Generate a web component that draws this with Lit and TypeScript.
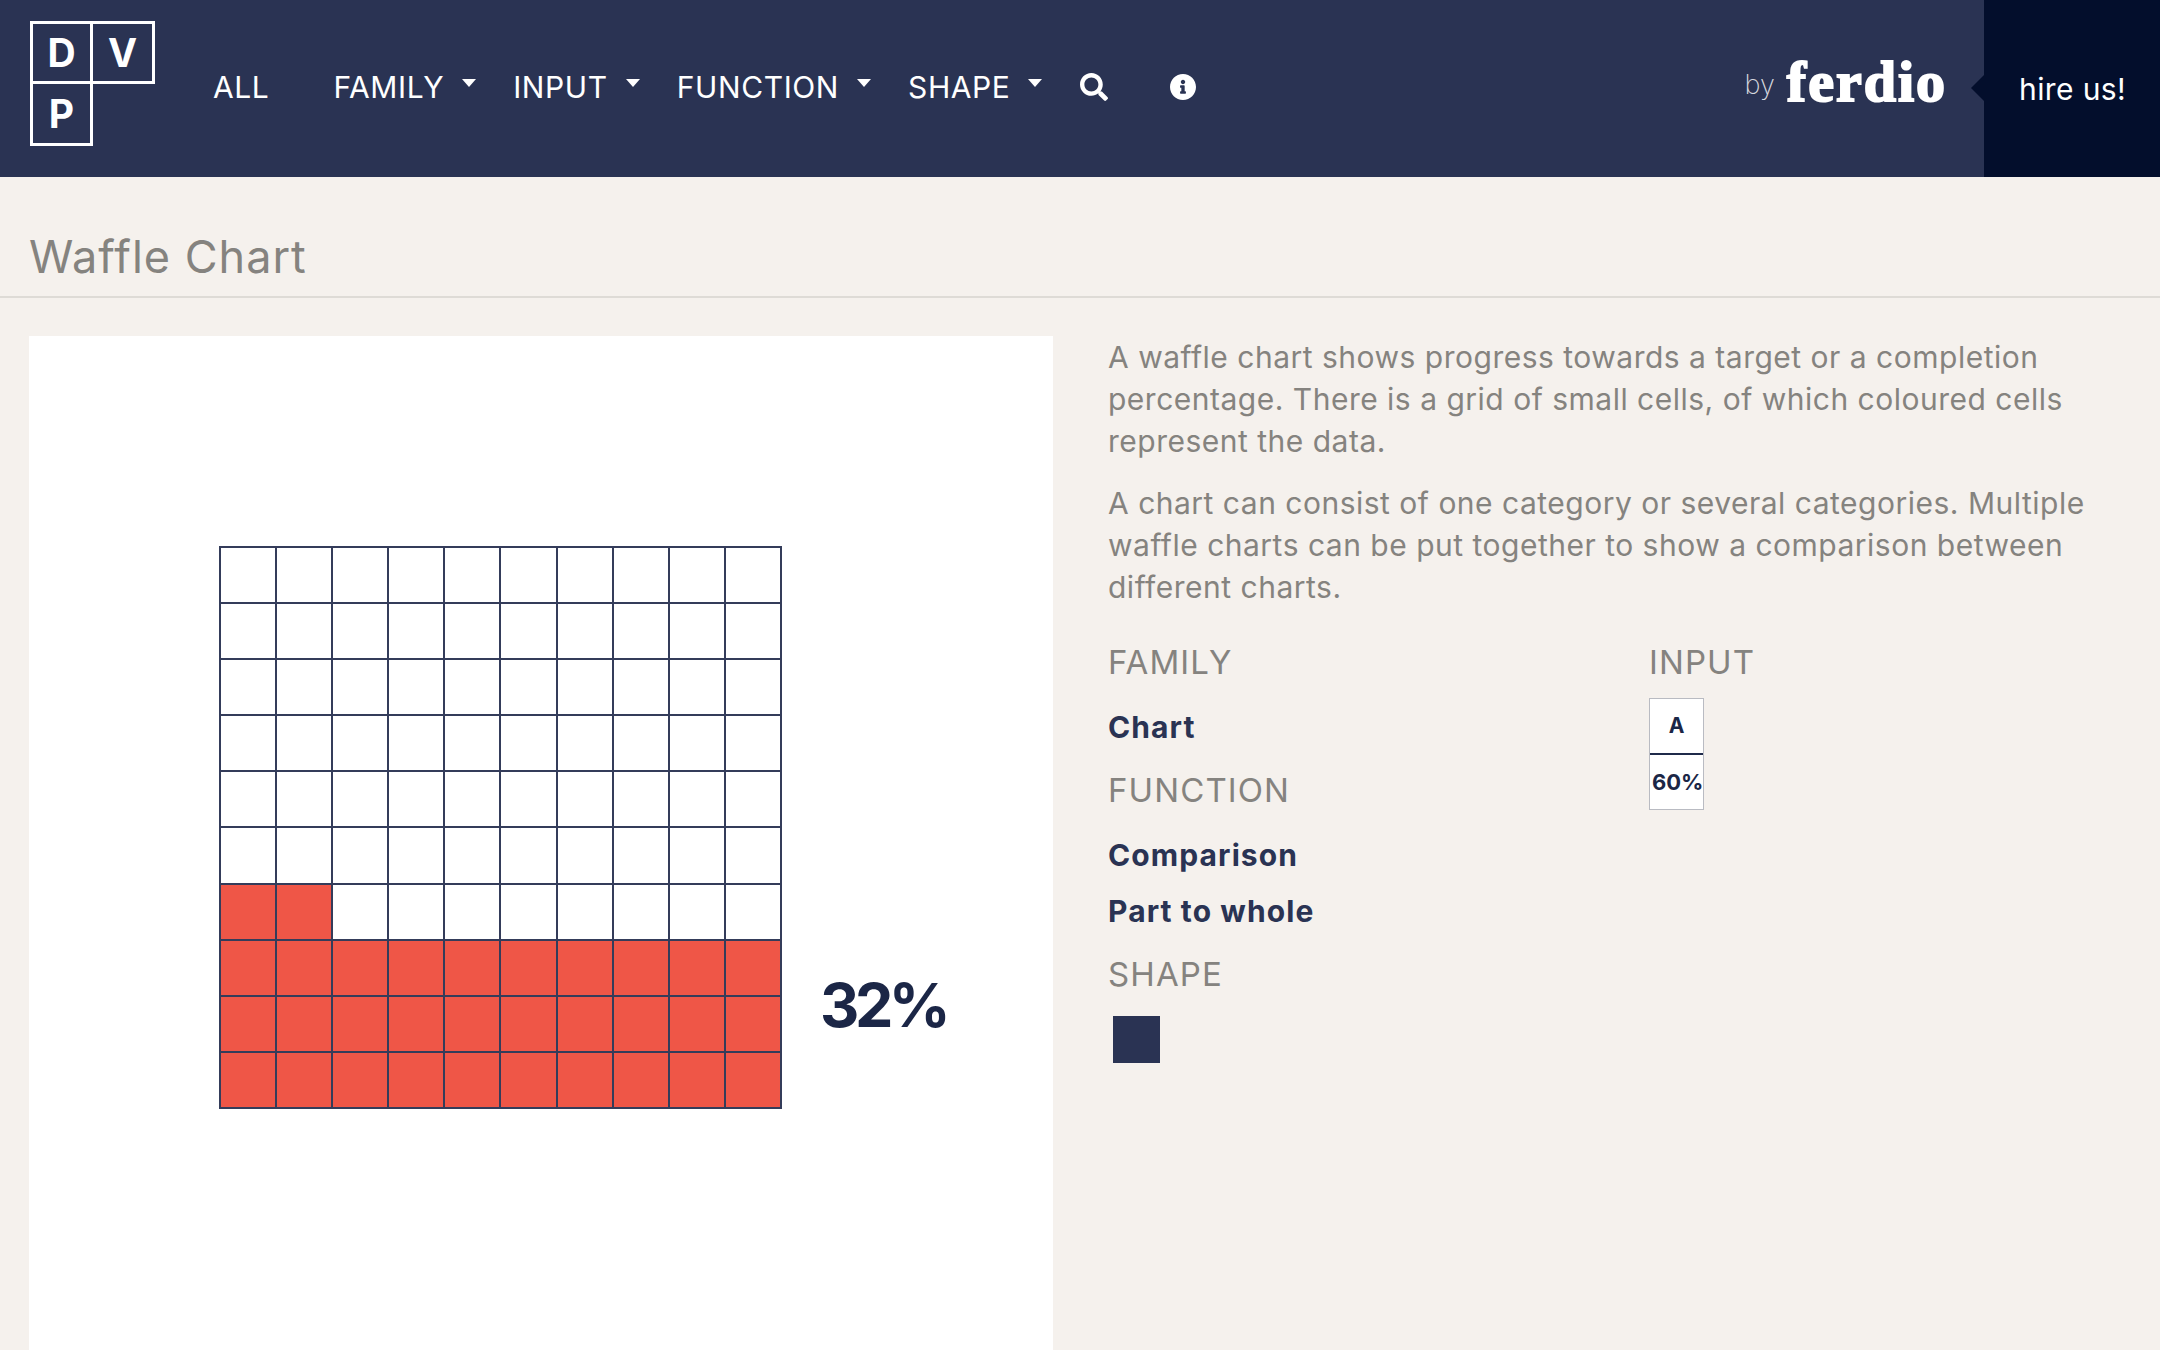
import { LitElement, html, css } from "lit"
import { customElement } from "lit/decorators.js"

// 32 van de 100 cellen gevuld, van onder naar boven
const CELLS = Array.from({ length: 100 }, (_, i) => {
  const row = Math.floor(i / 10)
  const col = i % 10
  return row >= 7 || (row === 6 && col < 2)
})

@customElement("app-root")
export class AppRoot extends LitElement {
  static styles = css`
    :host {
      display: block;
      width: 2160px;
      height: 1350px;
      overflow: hidden;
      background: #f5f1ed;
      font-family: Inter, "Liberation Sans", sans-serif;
      color: #85837f;
    }

    .header {
      display: flex;
      align-items: stretch;
      height: 177px;
      background: #2a3353;
      color: #fff;
    }

    .logo {
      display: grid;
      grid-template-columns: 63px 62px;
      grid-template-rows: 63px 62px;
      margin: 21px 0 0 30px;
      height: 125px;
    }

    .logo span {
      display: flex;
      align-items: center;
      justify-content: center;
      border: 3px solid #fff;
      font-size: 39px;
      font-weight: 700;
      line-height: 1;
    }

    .logo .v {
      border-left: 0;
    }

    .logo .p {
      border-top: 0;
    }

    .nav {
      display: flex;
      align-items: center;
      gap: 37px;
      height: 174px;
      margin-left: 58px;
      font-size: 30px;
      letter-spacing: 0.6px;
    }

    .nav .all {
      margin-right: 27px;
    }

    .nav .item {
      display: flex;
      align-items: center;
    }

    .caret {
      width: 0;
      height: 0;
      margin: 0 0 8px 18px;
      border-top: 8px solid #fff;
      border-left: 7.5px solid transparent;
      border-right: 7.5px solid transparent;
    }

    .nav svg {
      display: block;
      fill: #fff;
    }

    .nav .search {
      width: 28px;
      height: 28px;
      margin-left: 1px;
    }

    .nav .info {
      width: 26px;
      height: 26px;
      margin-left: 25px;
    }

    .by {
      display: flex;
      align-items: center;
      gap: 12px;
      margin-left: auto;
      margin-right: 37px;
      height: 170px;
    }

    .by small {
      font-size: 27px;
      font-weight: 200;
      color: #d5d7de;
      margin-top: -2px;
    }

    .by b {
      font-family: "Liberation Serif", serif;
      font-size: 58px;
      font-weight: 700;
      letter-spacing: 2px;
      -webkit-text-stroke: 2px #fff;
      color: #fff;
      line-height: 1;
      margin-top: -6px;
    }

    .hire {
      position: relative;
      display: flex;
      align-items: center;
      width: 141px;
      padding-left: 35px;
      background: #030e2c;
      font-size: 30px;
      letter-spacing: 0.4px;
    }

    .hire::before {
      content: "";
      position: absolute;
      left: -13px;
      top: 75px;
      border-top: 13.5px solid transparent;
      border-bottom: 13.5px solid transparent;
      border-right: 13px solid #030e2c;
    }

    .title {
      height: 121px;
      box-sizing: border-box;
      padding: 55px 0 0 29px;
      border-bottom: 2px solid #dedbd6;
      font-size: 45px;
      line-height: 50px;
      letter-spacing: 1px;
    }

    .main {
      display: flex;
      padding: 38px 0 0 29px;
    }

    .card {
      display: flex;
      gap: 38px;
      box-sizing: border-box;
      width: 1024px;
      height: 1014px;
      padding: 210px 0 0 190px;
      background: #fff;
    }

    .waffle {
      display: grid;
      grid-template-columns: repeat(10, 1fr);
      gap: 2px;
      width: 563px;
      height: 563px;
      box-sizing: border-box;
      padding: 2px;
      background: #343c5a;
      filter: blur(0.5px);
    }

    .cell {
      background: #fff;
    }

    .cell.on {
      background: #ef5647;
    }

    .pct {
      align-self: flex-start;
      margin-top: 428px;
      font-size: 61px;
      font-weight: 700;
      line-height: 62px;
      letter-spacing: -4.5px;
      color: #1b2646;
    }

    .side {
      width: 1030px;
      margin-left: 55px;
    }

    p {
      margin: 0 0 20px;
      font-size: 30px;
      line-height: 42px;
      letter-spacing: 0.5px;
    }

    .meta {
      display: grid;
      grid-template-columns: 541px 1fr;
      margin-top: 33px;
    }

    h3 {
      margin: 0 0 17px;
      font-size: 33px;
      font-weight: 400;
      line-height: 42px;
      height: 40px;
      letter-spacing: 1.1px;
    }

    .group {
      margin-bottom: 15px;
    }

    .value {
      height: 56px;
      font-size: 30px;
      font-weight: 700;
      line-height: 58px;
      letter-spacing: 1.1px;
      color: #2a3353;
    }

    .glyph {
      box-sizing: border-box;
      width: 55px;
      border: 1px solid #b9bbc2;
      background: #fff;
      color: #1b2646;
      font-weight: 700;
      text-align: center;
    }

    .glyph div {
      height: 54px;
      font-size: 21px;
      line-height: 54px;
      white-space: nowrap;
    }

    .glyph .a {
      border-bottom: 2px solid #1f2a4a;
    }

    .glyph .n {
      padding-left: 2px;
      font-size: 22px;
    }

    .square {
      width: 47px;
      height: 47px;
      margin: 23px 0 0 5px;
      background: #2a3353;
    }
  `

  render() {
    return html`
      <div class="header">
        <div class="logo">
          <span>D</span>
          <span class="v">V</span>
          <span class="p">P</span>
        </div>
        <div class="nav">
          <div class="all">ALL</div>
          <div class="item">FAMILY<i class="caret"></i></div>
          <div class="item">INPUT<i class="caret"></i></div>
          <div class="item">FUNCTION<i class="caret"></i></div>
          <div class="item">SHAPE<i class="caret"></i></div>
          <svg class="search" viewBox="0 0 512 512">
            <path d="M505 442.7L405.3 343c-4.5-4.5-10.6-7-17-7H372c27.6-35.3 44-79.7 44-128C416 93.1 322.9 0 208 0S0 93.1 0 208s93.1 208 208 208c48.3 0 92.7-16.4 128-44v16.3c0 6.4 2.5 12.5 7 17l99.7 99.7c9.4 9.4 24.6 9.4 33.9 0l28.3-28.3c9.4-9.4 9.4-24.6.1-34zM208 336c-70.7 0-128-57.2-128-128 0-70.7 57.2-128 128-128 70.7 0 128 57.2 128 128 0 70.7-57.2 128-128 128z"></path>
          </svg>
          <svg class="info" viewBox="8 8 496 496">
            <path d="M256 8C119.043 8 8 119.083 8 256c0 136.997 111.043 248 248 248s248-111.003 248-248C504 119.083 392.957 8 256 8zm0 110c23.196 0 42 18.804 42 42s-18.804 42-42 42-42-18.804-42-42 18.804-42 42-42zm56 254c0 6.627-5.373 12-12 12h-88c-6.627 0-12-5.373-12-12v-24c0-6.627 5.373-12 12-12h12v-64h-12c-6.627 0-12-5.373-12-12v-24c0-6.627 5.373-12 12-12h64c6.627 0 12 5.373 12 12v100h12c6.627 0 12 5.373 12 12v24z"></path>
          </svg>
        </div>
        <div class="by"><small>by</small><b>ferdio</b></div>
        <div class="hire">hire us!</div>
      </div>

      <div class="title">Waffle Chart</div>

      <div class="main">
        <div class="card">
          <div class="waffle">
            ${CELLS.map((on) => html`<div class="cell ${on ? "on" : ""}"></div>`)}
          </div>
          <div class="pct">32%</div>
        </div>
        <div class="side">
          <p>A waffle chart shows progress towards a target or a completion percentage. There is a grid of small cells, of which coloured cells represent the data.</p>
          <p>A chart can consist of one category or several categories. Multiple waffle charts can be put together to show a comparison between different charts.</p>
          <div class="meta">
            <div>
              <div class="group">
                <h3>FAMILY</h3>
                <div class="value">Chart</div>
              </div>
              <div class="group">
                <h3>FUNCTION</h3>
                <div class="value">Comparison</div>
                <div class="value">Part to whole</div>
              </div>
              <h3>SHAPE</h3>
              <div class="square"></div>
            </div>
            <div>
              <h3>INPUT</h3>
              <div class="glyph">
                <div class="a">A</div>
                <div class="n">60%</div>
              </div>
            </div>
          </div>
        </div>
      </div>
    `
  }
}
